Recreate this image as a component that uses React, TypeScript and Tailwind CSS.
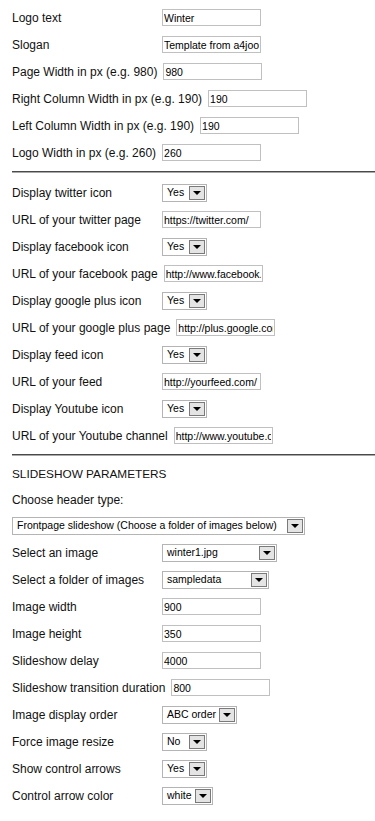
import React from 'react';

type Field =
  | { kind: 'input'; label: string; value: string }
  | { kind: 'select'; label: string; value: string; width: string };

const general: Field[] = [
  { kind: 'input', label: 'Logo text', value: 'Winter' },
  { kind: 'input', label: 'Slogan', value: 'Template from a4joomla' },
  { kind: 'input', label: 'Page Width in px (e.g. 980)', value: '980' },
  { kind: 'input', label: 'Right Column Width in px (e.g. 190)', value: '190' },
  { kind: 'input', label: 'Left Column Width in px (e.g. 190)', value: '190' },
  { kind: 'input', label: 'Logo Width in px (e.g. 260)', value: '260' },
];

const social: Field[] = [
  { kind: 'select', label: 'Display twitter icon', value: 'Yes', width: 'w-[45px]' },
  { kind: 'input', label: 'URL of your twitter page', value: 'https://twitter.com/' },
  { kind: 'select', label: 'Display facebook icon', value: 'Yes', width: 'w-[45px]' },
  { kind: 'input', label: 'URL of your facebook page', value: 'http://www.facebook.com/' },
  { kind: 'select', label: 'Display google plus icon', value: 'Yes', width: 'w-[45px]' },
  { kind: 'input', label: 'URL of your google plus page', value: 'http://plus.google.com/' },
  { kind: 'select', label: 'Display feed icon', value: 'Yes', width: 'w-[45px]' },
  { kind: 'input', label: 'URL of your feed', value: 'http://yourfeed.com/' },
  { kind: 'select', label: 'Display Youtube icon', value: 'Yes', width: 'w-[45px]' },
  { kind: 'input', label: 'URL of your Youtube channel', value: 'http://www.youtube.com/' },
];

const slideshow: Field[] = [
  { kind: 'select', label: 'Select an image', value: 'winter1.jpg', width: 'w-[115px]' },
  { kind: 'select', label: 'Select a folder of images', value: 'sampledata', width: 'w-[107px]' },
  { kind: 'input', label: 'Image width', value: '900' },
  { kind: 'input', label: 'Image height', value: '350' },
  { kind: 'input', label: 'Slideshow delay', value: '4000' },
  { kind: 'input', label: 'Slideshow transition duration', value: '800' },
  { kind: 'select', label: 'Image display order', value: 'ABC order', width: 'w-[75px]' },
  { kind: 'select', label: 'Force image resize', value: 'No', width: 'w-[45px]' },
  { kind: 'select', label: 'Show control arrows', value: 'Yes', width: 'w-[45px]' },
  { kind: 'select', label: 'Control arrow color', value: 'white', width: 'w-[51px]' },
];

function FakeSelect({ value, width }: { value: string; width: string }) {
  return (
    <div className={`${width} h-[18px] flex items-center border border-[#b4b4b4] bg-white shrink-0`}>
      <span className="flex-1 pl-[4px] text-[10.5px] text-black whitespace-nowrap overflow-hidden">{value}</span>
      <div className="w-[16px] h-[14px] mr-[1px] border border-[#7a7a7a] bg-[#e4e4e4] flex items-center justify-center shrink-0">
        <div className="w-0 h-0 border-l-[4px] border-r-[4px] border-t-[4px] border-l-transparent border-r-transparent border-t-black mt-[1px]" />
      </div>
    </div>
  );
}

function Row({ field }: { field: Field }) {
  return (
    <div className="h-[27px] flex items-center">
      <span className="min-w-[144px] mr-[6px] whitespace-nowrap">{field.label}</span>
      {field.kind === 'input' ? (
        <input
          readOnly
          value={field.value}
          className="w-[99px] h-[17px] border border-[#c0c0c0] bg-white px-[1px] text-[10.5px] text-black outline-none font-['Liberation_Sans',Arial,sans-serif]"
        />
      ) : (
        <FakeSelect value={field.value} width={field.width} />
      )}
    </div>
  );
}

function Divider() {
  return <div className="h-[2px] border-t border-t-[#4a4a4a] border-b border-b-[#a8a8a8]" />;
}

export default function App() {
  return (
    <div className="w-[375px] min-h-[821px] bg-white pl-[12px] pt-[4px] text-[12px] text-[#111] font-['Liberation_Sans',Arial,sans-serif]">
      {/* General */}
      {general.map((f) => (
        <Row key={f.label} field={f} />
      ))}
      <div className="mt-[5px] mb-[6px]">
        <Divider />
      </div>

      {/* Social icons */}
      {social.map((f) => (
        <Row key={f.label} field={f} />
      ))}
      <div className="mt-[5px]">
        <Divider />
      </div>

      {/* Slideshow */}
      <div className="h-[26px] mt-[6px] flex items-center text-[11.8px]">SLIDESHOW PARAMETERS</div>
      <div className="h-[24px] flex items-center">Choose header type:</div>
      <div className="h-[27px] flex items-center">
        <FakeSelect value="Frontpage slideshow (Choose a folder of images below)" width="w-[293px]" />
      </div>
      {slideshow.map((f) => (
        <Row key={f.label} field={f} />
      ))}
    </div>
  );
}
